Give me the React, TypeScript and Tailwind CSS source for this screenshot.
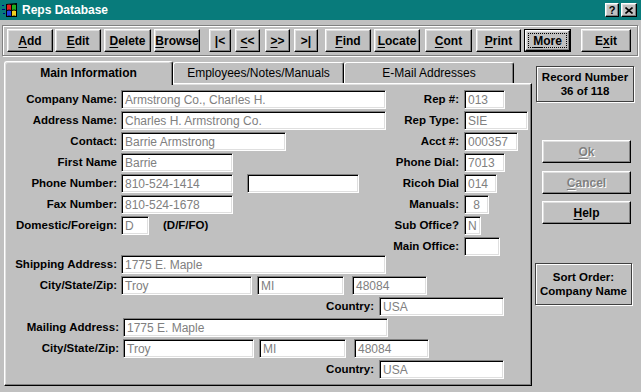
import React from 'react';

// Win95-style bevels
const raised =
  'bg-[#c0c0c0] border border-t-white border-l-white border-r-black border-b-black shadow-[inset_-1px_-1px_0_#808080,inset_1px_1px_0_#dfdfdf]';
const sunken =
  'bg-white border border-t-[#808080] border-l-[#808080] border-b-white border-r-white shadow-[inset_1px_1px_0_#000,inset_-1px_-1px_0_#dfdfdf]';
const etched = 'border border-[#808080] shadow-[inset_1px_1px_0_white,1px_1px_0_white]';
const box = 'border border-[#404040] shadow-[inset_1px_1px_0_white,1px_1px_0_white]';

function U({ children }: { children: React.ReactNode }) {
  return <span className="underline decoration-1 underline-offset-[2px]">{children}</span>;
}

function ToolBtn({ className, children, def }: { className: string; children: React.ReactNode; def?: boolean }) {
  if (def) {
    return (
      <div className={`${className} h-[23px] border border-black`}>
        <div className={`${raised} h-full flex items-center justify-center p-[2px]`}>
          <div className="w-full h-full border border-dotted border-black flex items-center justify-center text-[12px] font-bold">
            {children}
          </div>
        </div>
      </div>
    );
  }
  return (
    <div className={`${className} ${raised} h-[23px] flex items-center justify-center text-[12px] font-bold`}>
      {children}
    </div>
  );
}

function Field({ className, value, center }: { className: string; value?: string; center?: boolean }) {
  return (
    <div
      className={`${sunken} ${className} h-[19px] flex items-center px-[3px] text-[12px] text-[#808080] leading-none whitespace-nowrap overflow-hidden ${center ? 'justify-center' : ''}`}
    >
      {value}
    </div>
  );
}

function Label({ className, children }: { className: string; children: React.ReactNode }) {
  return <div className={`${className} text-right text-[11.5px] font-bold whitespace-nowrap`}>{children}</div>;
}

function Row({ label, left, rLabel, right }: { label?: string; left?: React.ReactNode; rLabel: string; right: React.ReactNode }) {
  return (
    <div className="flex items-center h-[19px] mb-[2px]">
      {label ? <Label className="w-[112px]">{label}</Label> : null}
      <div className="ml-[4px] flex items-center">{left}</div>
      <Label className="flex-1">{rLabel}</Label>
      <div className="ml-[5px] w-[67px] flex">{right}</div>
    </div>
  );
}

function AddressBlock({ label, shift }: { label: string; shift?: boolean }) {
  return (
    <div>
      <div className={`flex items-center h-[19px] mb-[2px] ${shift ? 'pl-[2px]' : ''}`}>
        <Label className="w-[112px]">{label}</Label>
        <Field className="ml-[4px] w-[265px]" value="1775 E. Maple" />
      </div>
      <div className={`flex items-center h-[19px] mb-[2px] ${shift ? 'pl-[2px]' : ''}`}>
        <Label className="w-[112px]">City/State/Zip:</Label>
        <Field className="ml-[4px] w-[131px]" value="Troy" />
        <Field className="ml-[5px] w-[87px]" value="MI" />
        <Field className="ml-[8px] w-[75px]" value="48084" />
      </div>
      <div className="flex items-center h-[19px] mb-[2px]">
        <Label className="w-[369px]">Country:</Label>
        <Field className="ml-[5px] w-[125px]" value="USA" />
      </div>
    </div>
  );
}

function AppIcon() {
  return (
    <svg width="16" height="16" viewBox="0 0 16 16">
      <rect x="0" y="3" width="2" height="1" fill="#000080" />
      <rect x="0" y="7" width="3" height="1" fill="#000080" />
      <rect x="1" y="11" width="2" height="1" fill="#000080" />
      <path d="M4 2 L15 1 L15 15 L4 15 Z" fill="#000" />
      <path d="M5 3 Q7 2 9 3 L9 8 Q7 7 5 8 Z" fill="#e02020" />
      <path d="M10 3 Q12 2 14 3 L14 8 Q12 7 10 8 Z" fill="#20b020" />
      <path d="M5 9 Q7 8 9 9 L9 14 Q7 13 5 14 Z" fill="#2040e0" />
      <path d="M10 9 Q12 8 14 9 L14 14 Q12 13 10 14 Z" fill="#f0d020" />
    </svg>
  );
}

export default function App() {
  return (
    <div className="w-[641px] h-[392px] bg-[#c0c0c0] overflow-hidden flex flex-col font-['Liberation_Sans',Arial,sans-serif] text-black">
      {/* title bar */}
      <div className="h-[20px] bg-[#087b7b] flex items-center pl-[2px] pr-[4px]">
        <AppIcon />
        <div className="ml-[4px] text-white font-bold text-[12px]">Reps Database</div>
        <div className="ml-auto flex items-center gap-[2px]">
          <div className={`${raised} w-[14px] h-[14px] flex items-center justify-center text-[11px] font-bold leading-none`}>?</div>
          <div className={`${raised} w-[16px] h-[14px] flex items-center justify-center`}>
            <svg width="8" height="7" viewBox="0 0 8 7">
              <path d="M0.5 0.5 L7.5 6.5 M7.5 0.5 L0.5 6.5" stroke="#000" strokeWidth="1.6" />
            </svg>
          </div>
        </div>
      </div>

      {/* toolbar */}
      <div className={`${etched} mt-[5px] mx-[2px] w-[636px] h-[31px] flex items-start pt-[3px] pl-[4px]`}>
        <ToolBtn className="w-[46px]"><U>A</U>dd</ToolBtn>
        <ToolBtn className="ml-[2px] w-[46px]"><U>E</U>dit</ToolBtn>
        <ToolBtn className="ml-[3px] w-[47px]"><U>D</U>elete</ToolBtn>
        <ToolBtn className="ml-[3px] w-[46px]"><U>B</U>rowse</ToolBtn>
        <ToolBtn className="ml-[9px] w-[22px]">|&lt;</ToolBtn>
        <ToolBtn className="ml-[4px] w-[25px]"><U>&lt;</U>&lt;</ToolBtn>
        <ToolBtn className="ml-[5px] w-[25px]"><U>&gt;</U>&gt;</ToolBtn>
        <ToolBtn className="ml-[4px] w-[24px]">&gt;|</ToolBtn>
        <ToolBtn className="ml-[7px] w-[46px]"><U>F</U>ind</ToolBtn>
        <ToolBtn className="ml-[3px] w-[46px]"><U>L</U>ocate</ToolBtn>
        <ToolBtn className="ml-[5px] w-[47px]"><U>C</U>ont</ToolBtn>
        <ToolBtn className="ml-[4px] w-[45px]"><U>P</U>rint</ToolBtn>
        <ToolBtn className="ml-[3px] w-[47px]" def><U>M</U>ore</ToolBtn>
        <ToolBtn className="ml-[10px] w-[50px]">E<U>x</U>it</ToolBtn>
      </div>

      <div className="flex mt-[5px]">
        {/* tabbed area */}
        <div className="pl-[4px] w-[532px] flex flex-col">
          <div className="flex h-[22px] relative z-10">
            <div className="w-[169px] h-[24px] bg-[#c0c0c0] border-t border-l border-t-white border-l-white border-r border-r-black rounded-t-[3px] shadow-[inset_-1px_0_0_#808080,inset_1px_1px_0_#dfdfdf] flex items-center justify-center pb-[2px] text-[12px] font-bold">
              Main Information
            </div>
            <div className="w-[171px] h-[21px] mt-[1px] border-t border-l border-t-white border-l-white border-r border-r-black rounded-t-[3px] shadow-[inset_-1px_0_0_#808080] flex items-center justify-center text-[12px]">
              Employees/Notes/Manuals
            </div>
            <div className="w-[170px] h-[21px] mt-[1px] border-t border-l border-t-white border-l-white border-r border-r-black rounded-t-[3px] shadow-[inset_-1px_0_0_#808080] flex items-center justify-center text-[12px]">
              E-Mail Addresses
            </div>
          </div>
          <div className={`${raised} w-[528px] h-[303px] pt-[6px]`}>
            <Row label="Company Name:" left={<Field className="w-[265px]" value="Armstrong Co., Charles H." />} rLabel="Rep #:" right={<Field className="w-[41px]" value="013" />} />
            <Row label="Address Name:" left={<Field className="w-[265px]" value="Charles H. Armstrong Co." />} rLabel="Rep Type:" right={<Field className="w-[64px]" value="SIE" />} />
            <Row label="Contact:" left={<Field className="w-[165px]" value="Barrie Armstrong" />} rLabel="Acct #:" right={<Field className="w-[54px]" value="000357" />} />
            <Row label="First Name" left={<Field className="w-[112px]" value="Barrie" />} rLabel="Phone Dial:" right={<Field className="w-[41px]" value="7013" />} />
            <Row
              label="Phone Number:"
              left={
                <>
                  <Field className="w-[112px]" value="810-524-1414" />
                  <Field className="ml-[14px] w-[112px]" />
                </>
              }
              rLabel="Ricoh Dial"
              right={<Field className="w-[33px]" value="014" />}
            />
            <Row label="Fax Number:" left={<Field className="w-[112px]" value="810-524-1678" />} rLabel="Manuals:" right={<Field className="w-[25px]" value="8" center />} />
            <Row
              label="Domestic/Foreign:"
              left={
                <>
                  <Field className="w-[28px]" value="D" />
                  <span className="ml-[14px] text-[11.5px] font-bold">(D/F/FO)</span>
                </>
              }
              rLabel="Sub Office?"
              right={<Field className="w-[17px]" value="N" />}
            />
            <Row rLabel="Main Office:" right={<Field className="w-[36px]" />} />
            <div className="-mt-[3px]">
              <AddressBlock label="Shipping Address:" />
            </div>
            <div className="mt-[1px]">
              <AddressBlock label="Mailing Address:" shift />
            </div>
          </div>
        </div>

        {/* right column */}
        <div className="flex-1 flex flex-col">
          <div className={`${box} mt-[5px] ml-[4px] w-[98px] h-[36px] flex flex-col items-center justify-center text-[11.5px] font-bold leading-[14px]`}>
            <div>Record Number</div>
            <div>36 of 118</div>
          </div>
          <div className={`${raised} mt-[38px] ml-[10px] w-[89px] h-[23px] flex items-center justify-center text-[12px] font-bold text-[#808080] [text-shadow:1px_1px_0_#fff]`}>
            <U>O</U>k
          </div>
          <div className={`${raised} mt-[8px] ml-[10px] w-[89px] h-[23px] flex items-center justify-center text-[12px] font-bold text-[#808080] [text-shadow:1px_1px_0_#fff]`}>
            <U>C</U>ancel
          </div>
          <div className={`${raised} mt-[7px] ml-[10px] w-[89px] h-[23px] flex items-center justify-center text-[12px] font-bold`}>
            <U>H</U>elp
          </div>
          <div className={`${box} mt-[39px] ml-[3px] w-[97px] h-[42px] flex flex-col items-center justify-center text-[11.5px] font-bold leading-[14px]`}>
            <div>Sort Order:</div>
            <div>Company Name</div>
          </div>
        </div>
      </div>
    </div>
  );
}
